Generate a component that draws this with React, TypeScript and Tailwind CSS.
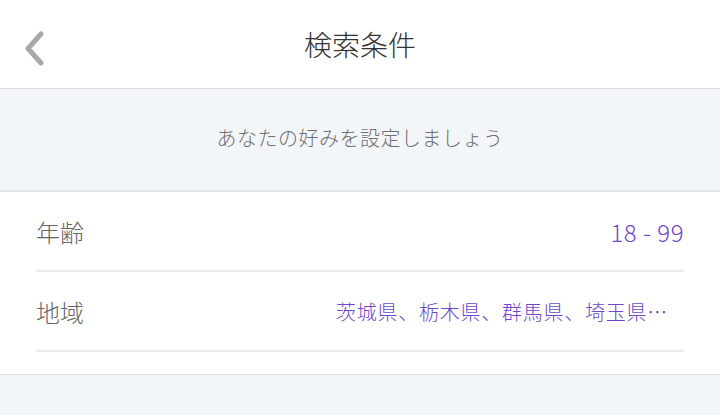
const font = {
  fontFamily: '"Noto Sans CJK JP", "Noto Sans", sans-serif',
};

const Row = ({ label, children }: { label: string; children: React.ReactNode }) => (
  <div className="flex h-[80px] items-center justify-between border-b-2 border-[#ebebeb] pt-[2px]">
    <span className="text-[24px] font-light text-[#666666]">{label}</span>
    {children}
  </div>
);

export default function App() {
  return (
    <div className="h-[415px] w-[720px] overflow-hidden bg-[#f3f6f9]" style={font}>
      <header className="relative flex h-[89px] items-center justify-center border-b border-[#dddddd] bg-white">
        <button className="absolute left-[20px] top-[26px] p-1">
          <svg width="22" height="36" viewBox="0 0 22 36" fill="none">
            <path
              d="M17 4 L4 18.5 L17 33"
              stroke="#a9a9a9"
              strokeWidth="5"
              strokeLinecap="round"
              strokeLinejoin="round"
            />
          </svg>
        </button>
        <h1 className="-mt-[1px] text-[28px] font-light text-[#333333]">検索条件</h1>
      </header>
      <div className="flex h-[103px] items-center justify-center border-b-2 border-[#e4e7ea]">
        <p className="-mt-[3px] text-[20px] font-light tracking-[0.5px] text-[#6e6e6e]">
          あなたの好みを設定しましょう
        </p>
      </div>
      <section className="h-[183px] border-b border-[#dfe2e5] bg-white px-[36px]">
        <Row label="年齢">
          <span className="text-[24px] font-light tracking-[0.5px] text-[#7047c9]">18 - 99</span>
        </Row>
        <Row label="地域">
          <span className="mr-[16px] text-[20px] font-light tracking-[0.75px] text-[#7047c9]">
            茨城県、栃木県、群馬県、埼玉県…
          </span>
        </Row>
      </section>
    </div>
  );
}
